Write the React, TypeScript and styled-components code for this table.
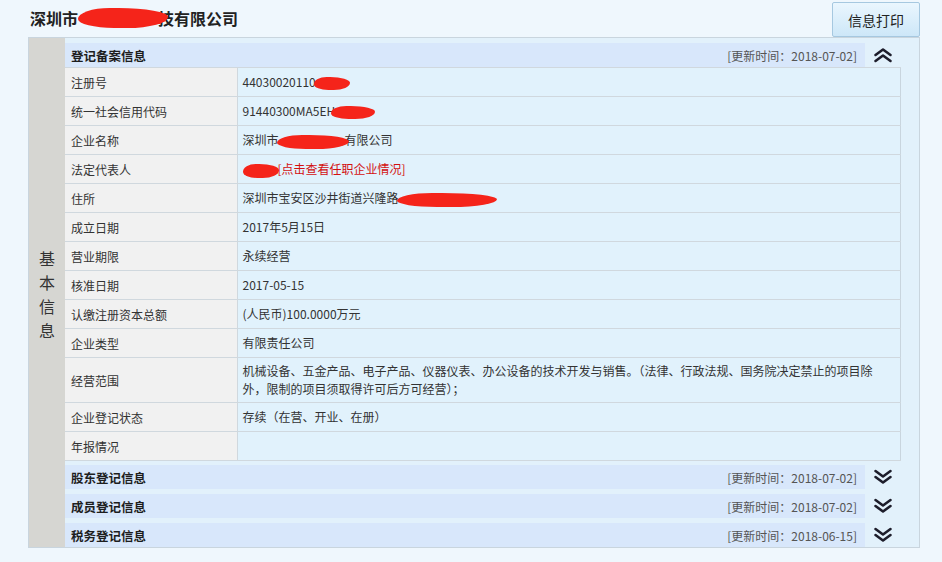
import React from "react";
import styled, { createGlobalStyle } from "styled-components";

const Global = createGlobalStyle`
  html, body { margin: 0; padding: 0; background: #eff7fd; }
  body { font-family: "Noto Sans CJK SC", "Liberation Sans", sans-serif; color: #333; }
`;

const Page = styled.div`
  width: 942px;
  height: 562px;
  background: #eff7fd;
  overflow: hidden;
`;

const TopBar = styled.div`
  height: 37px;
  display: flex;
  align-items: flex-start;
  justify-content: space-between;
  padding: 0 22px 0 30px;
  box-sizing: border-box;
`;

const Title = styled.h1`
  margin: 0;
  padding-top: 7px;
  font-size: 16px;
  line-height: 22px;
  font-weight: bold;
  color: #222;
  display: flex;
  align-items: center;
  white-space: nowrap;
`;

const PrintButton = styled.button`
  margin-top: 2px;
  width: 88px;
  height: 35px;
  border: 1px solid #a6c8e0;
  border-radius: 2px;
  background: linear-gradient(#eaf6fe, #cde7f8);
  font-family: "Noto Sans CJK SC", sans-serif;
  font-size: 14px;
  color: #222;
  padding: 0;
  cursor: pointer;
`;

const Panel = styled.div`
  margin: 0 22px 0 28px;
  height: 511px;
  box-sizing: border-box;
  border: 1px solid #c9d5de;
  background: #e2f1fb;
  display: flex;
`;

const SideLabel = styled.div`
  width: 36px;
  flex: none;
  background: #d6d6d2;
  display: flex;
  align-items: center;
  justify-content: center;
`;

const SideText = styled.div`
  width: 16px;
  font-size: 16px;
  line-height: 24px;
  color: #333;
  text-align: center;
  margin-top: 3px;
`;

const Content = styled.div`
  flex: 1;
  padding: 5px 18px 0 0;
  display: flex;
  flex-direction: column;
`;

const SectionHeader = styled.div<{ $gap?: number }>`
  display: flex;
  height: 24px;
  margin-top: ${(p) => p.$gap ?? 0}px;
  flex: none;
`;

const HeaderBar = styled.div`
  flex: 1;
  background: #d8e7fb;
  display: flex;
  align-items: center;
  justify-content: space-between;
  padding: 0 8px 0 6px;
`;

const HeaderTitle = styled.span`
  font-size: 12.5px;
  font-weight: bold;
  color: #1e1e1e;
`;

const UpdateTime = styled.span`
  font-size: 12px;
  color: #555;
`;

const Toggle = styled.div`
  width: 36px;
  display: flex;
  align-items: center;
  justify-content: center;
`;

const Table = styled.table`
  border-collapse: collapse;
  width: 100%;
  flex: none;
  border-right: 1px solid #c9d5de;
`;

const Row = styled.tr<{ $tall?: boolean }>`
  height: ${(p) => (p.$tall ? 45 : 29)}px;
  border-top: 1px solid #d0d8de;
  border-bottom: 1px solid #d0d8de;
`;

const LabelCell = styled.td`
  width: 172px;
  box-sizing: border-box;
  background: #f1f1f1;
  border-right: 1px solid #d0d8de;
  font-size: 12px;
  color: #333;
  padding: 0 6px;
  vertical-align: middle;
`;

const ValueCell = styled.td`
  background: #e1f2fc;
  font-size: 12px;
  line-height: 18px;
  color: #333;
  padding: 3px 5px;
  vertical-align: middle;
`;

const Redact = styled.span<{ $w: number; $h?: number; $ml?: number; $mr?: number }>`
  display: inline-block;
  position: relative;
  z-index: 1;
  width: ${(p) => p.$w}px;
  height: ${(p) => p.$h ?? 12}px;
  margin-left: ${(p) => p.$ml ?? 0}px;
  margin-right: ${(p) => p.$mr ?? 0}px;
  background: #f5241a;
  border-radius: 35% 55% 45% 40% / 55% 45% 55% 45%;
  vertical-align: middle;
`;

const RedLink = styled.span`
  color: #d31010;
`;

const Chevrons = ({ up }: { up?: boolean }) => (
  <svg width="20" height="16" viewBox="0 0 20 16">
    <g
      fill="none"
      stroke="#1d1d2b"
      strokeWidth="2.6"
      strokeLinecap="round"
      strokeLinejoin="round"
      transform={up ? undefined : "rotate(180 10 8)"}
    >
      <path d="M2.5 8 L10 2.5 L17.5 8" />
      <path d="M2.5 14 L10 8.5 L17.5 14" />
    </g>
  </svg>
);

const rows: { label: string; value: React.ReactNode; tall?: boolean }[] = [
  { label: "注册号", value: <>44030020110<Redact $w={36} $h={13} $ml={-2} /></> },
  { label: "统一社会信用代码", value: <>91440300MA5EH<Redact $w={44} $h={13} $ml={-4} /></> },
  { label: "企业名称", value: <>深圳市<Redact $w={72} $h={14} $ml={-2} $mr={-4} />有限公司</> },
  {
    label: "法定代表人",
    value: (
      <>
        <Redact $w={36} $h={14} $mr={-1} />
        <RedLink>[点击查看任职企业情况]</RedLink>
      </>
    ),
  },
  { label: "住所", value: <>深圳市宝安区沙井街道兴隆路<Redact $w={100} $h={14} $ml={-2} /></> },
  { label: "成立日期", value: "2017年5月15日" },
  { label: "营业期限", value: "永续经营" },
  { label: "核准日期", value: "2017-05-15" },
  { label: "认缴注册资本总额", value: "(人民币)100.0000万元" },
  { label: "企业类型", value: "有限责任公司" },
  {
    label: "经营范围",
    value:
      "机械设备、五金产品、电子产品、仪器仪表、办公设备的技术开发与销售。（法律、行政法规、国务院决定禁止的项目除外，限制的项目须取得许可后方可经营）；",
    tall: true,
  },
  { label: "企业登记状态", value: "存续（在营、开业、在册）" },
  { label: "年报情况", value: "" },
];

const sections = [
  { title: "股东登记信息", time: "2018-07-02" },
  { title: "成员登记信息", time: "2018-07-02" },
  { title: "税务登记信息", time: "2018-06-15" },
];

export default function App() {
  return (
    <Page>
      <Global />
      <TopBar>
        <Title>
          深圳市
          <Redact $w={90} $h={20} $ml={0} $mr={-10} />
          技有限公司
        </Title>
        <PrintButton>信息打印</PrintButton>
      </TopBar>
      <Panel>
        <SideLabel>
          <SideText>基本信息</SideText>
        </SideLabel>
        <Content>
          <SectionHeader>
            <HeaderBar>
              <HeaderTitle>登记备案信息</HeaderTitle>
              <UpdateTime>[更新时间：2018-07-02]</UpdateTime>
            </HeaderBar>
            <Toggle>
              <Chevrons up />
            </Toggle>
          </SectionHeader>
          <Table>
            <tbody>
              {rows.map((r) => (
                <Row key={r.label} $tall={r.tall}>
                  <LabelCell>{r.label}</LabelCell>
                  <ValueCell>{r.value}</ValueCell>
                </Row>
              ))}
            </tbody>
          </Table>
          {sections.map((s, i) => (
            <SectionHeader key={s.title} $gap={i === 0 ? 4 : 5}>
              <HeaderBar>
                <HeaderTitle>{s.title}</HeaderTitle>
                <UpdateTime>[更新时间：{s.time}]</UpdateTime>
              </HeaderBar>
              <Toggle>
                <Chevrons />
              </Toggle>
            </SectionHeader>
          ))}
        </Content>
      </Panel>
    </Page>
  );
}
